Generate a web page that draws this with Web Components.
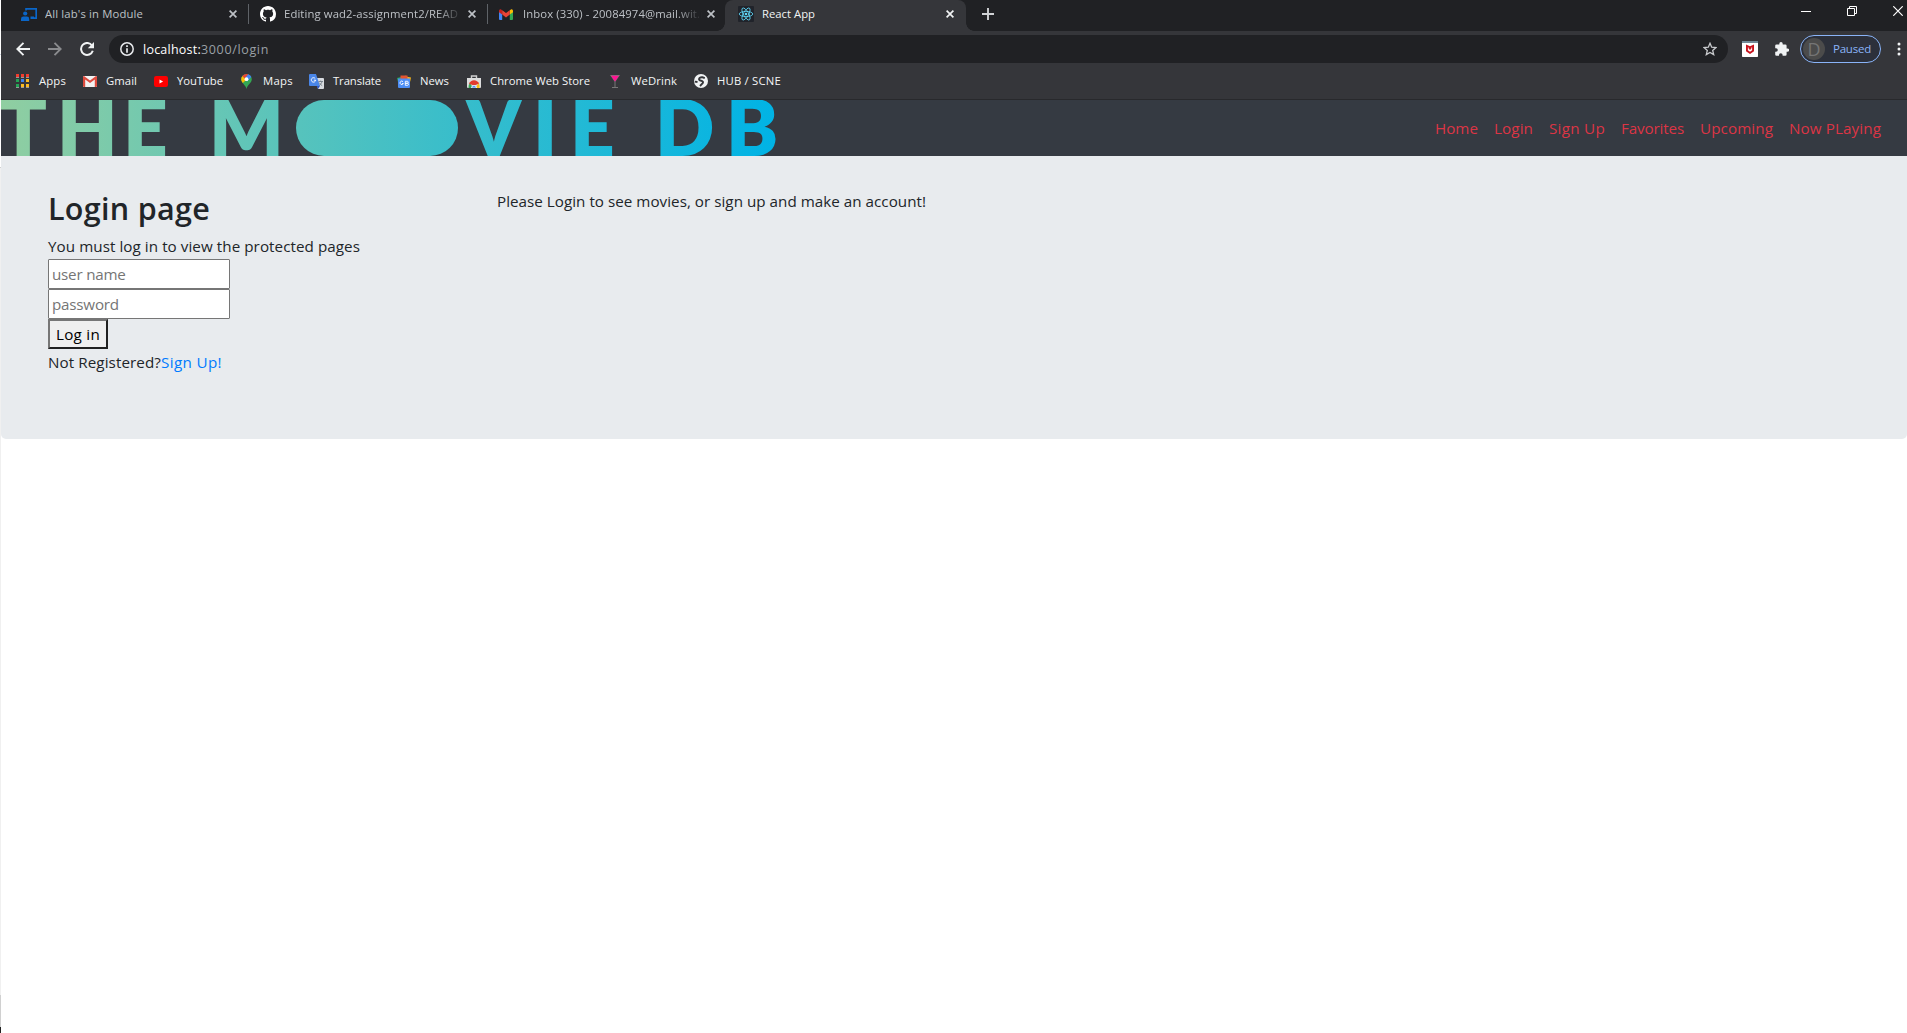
<!DOCTYPE html>
<html lang="en">
<head>
<meta charset="utf-8">
<title>React App</title>
<style>
html,body{margin:0;height:100%;background:#fff;overflow:hidden}
body{font-family:"Open Sans","Noto Sans",sans-serif}
</style>
</head>
<body>
<app-window></app-window>
<script>
const make = (name, html, after) => customElements.define(name, class extends HTMLElement {
  connectedCallback() {
    if (this.shadowRoot) return;
    const t = document.createElement('template');
    t.innerHTML = typeof html === 'function' ? html(this) : html;
    this.attachShadow({mode: 'open'}).append(t.content.cloneNode(true));
    if (after) after(this);
  }
});

/* A run of text spread over a given width by letter spacing. */
make('fit-text', el => `<style>:host{display:inline-block;white-space:pre;line-height:inherit;width:${el.getAttribute('w')}px}span{display:inline-block}</style><span>${el.getAttribute('text')}</span>`, el => {
  const s = el.shadowRoot.querySelector('span');
  const n = [...s.textContent].length;
  s.style.letterSpacing = ((+el.getAttribute('w') - s.getBoundingClientRect().width) / n).toFixed(3) + 'px';
});

const icons = {
  module: [16,13,'<path d="M5 .9h10.200v9.300H11" fill="none" stroke="#0a66c8" stroke-width="1.700"/><path d="M5 0v2.500" stroke="#0a66c8" stroke-width="1.600"/><circle cx="4.200" cy="5.500" r="2.100" fill="#0a66c8"/><path d="M0 13v-2q0-2.400 2.500-2.400h3.300q2.400 0 2.400 2.400v2z" fill="#0a66c8"/><path d="M9.500 8.500h3.500v2.500H9.500z" fill="#0a66c8"/>'],
  github: [16,16,'<path fill="#fff" d="M8 0C3.580 0 0 3.580 0 8c0 3.540 2.290 6.530 5.470 7.590.4.070.55-.17.55-.38 0-.19-.01-.82-.01-1.490-2.010.37-2.530-.49-2.690-.94-.09-.23-.48-.94-.82-1.130-.28-.15-.68-.52-.01-.53.63-.01 1.080.58 1.230.82.720 1.210 1.870.87 2.330.66.070-.52.28-.87.510-1.070-1.780-.2-3.640-.89-3.640-3.950 0-.87.310-1.590.82-2.150-.08-.2-.36-1.020.08-2.120 0 0 .67-.21 2.200.82.640-.18 1.320-.27 2-.27s1.360.09 2 .27c1.530-1.040 2.200-.82 2.200-.82.440 1.100.160 1.920.08 2.120.510.56.82 1.270.82 2.150 0 3.070-1.870 3.750-3.650 3.950.29.25.54.73.54 1.480 0 1.070-.01 1.930-.01 2.200 0 .21.150.46.550.38A8 8 0 0 0 16 8c0-4.420-3.580-8-8-8z"/>'],
  gmail: [14,11,'<path fill="#4285f4" d="M0 1.500 3.200 4v7H1q-1 0-1-1z"/><path fill="#34a853" d="M14 1.500 10.800 4v7H13q1 0 1-1z"/><path fill="#fbbc04" d="M10.800 1.200 12.300.2Q14 0 14 1.800v1.400l-3.200 2.400z"/><path fill="#c5221f" d="M0 1.800Q0 0 1.700.2l1.500 1v4.400L0 3.200z"/><path fill="#ea4335" d="m3.200 1.200 3.800 2.900 3.800-2.900v4.400L7 8.500 3.200 5.600z"/>'],
  react: [16,16,'<rect width="16" height="16" rx="1" fill="#20232a"/><g fill="none" stroke="#61dafb" stroke-width=".8"><ellipse cx="8" cy="8" rx="6.800" ry="2.600"/><ellipse cx="8" cy="8" rx="6.800" ry="2.600" transform="rotate(60 8 8)"/><ellipse cx="8" cy="8" rx="6.800" ry="2.600" transform="rotate(120 8 8)"/></g><circle cx="8" cy="8" r="1.300" fill="#61dafb"/>'],
  close: [8,8,'<path d="m.6.6 6.800 6.800M7.400.6.6 7.400" stroke="currentColor" stroke-width="1.700"/>'],
  plus: [12,12,'<path d="M6 0v12M0 6h12" stroke="#d0d2d5" stroke-width="1.900"/>'],
  back: [14,14,'<path d="M14 7H1.500M7.500.8 1.300 7l6.200 6.200" fill="none" stroke="currentColor" stroke-width="1.900"/>'],
  forward: [14,14,'<path d="M0 7h12.500M6.500.8 12.700 7l-6.200 6.200" fill="none" stroke="currentColor" stroke-width="1.900"/>'],
  reload: [14,14,'<path d="M12 3.500A6 6 0 1 0 12.800 8.800" fill="none" stroke="#f1f3f4" stroke-width="2"/><path d="M14 0v6.200H7.800z" fill="#f1f3f4"/>'],
  info: [14,14,'<circle cx="7" cy="7" r="6.200" fill="none" stroke="#e8eaed" stroke-width="1.500"/><path d="M7 3.200v1.700M7 6.200v4.600" stroke="#e8eaed" stroke-width="1.700"/>'],
  star: [14,14,'<path d="m7 1.300 1.700 3.900 4.200.4-3.200 2.800 1 4.200L7 10.400l-3.700 2.200 1-4.200L1.100 5.600l4.200-.4z" fill="none" stroke="#c8cacd" stroke-width="1.300"/>'],
  mcafee: [16,16,'<rect width="16" height="16" rx=".7" fill="#fff"/><path d="M0 0h16v2H0z" fill="#718a98"/><path d="m4 3.500 4 1.800 4-1.800v6.700L8 13l-4-2.800z" fill="#c8141e"/><path d="M5.900 6.300 8 7.400l2.100-1.100v3L8 10.800 5.900 9.300z" fill="#fff"/><path d="m6.700 6.500 1.300.8 1.300-.8V8L8 8.800 6.700 8z" fill="#c8141e"/>'],
  puzzle: [14,14,'<path fill="#f1f3f4" d="M12.500 6.500h-.9V3.700q0-1.300-1.300-1.300H7.700v-.6a1.700 1.700 0 0 0-3.400 0v.6H1.500Q.2 2.400.2 3.700v2.500h.8a1.800 1.800 0 0 1 0 3.600H.2v2.700q0 1.300 1.300 1.300H4V13a1.800 1.800 0 0 1 3.600 0v.8h2.700q1.300 0 1.300-1.300V9.800h.9a1.650 1.650 0 0 0 0-3.300z"/>'],
  dots: [4,14,'<g fill="#f1f3f4"><circle cx="2" cy="2" r="1.500"/><circle cx="2" cy="7" r="1.500"/><circle cx="2" cy="12" r="1.500"/></g>'],
  min: [10,10,'<path d="M0 5.500h10" stroke="#fff"/>'],
  restore: [10,10,'<path d="M.5 2.500h7v7h-7zM2.500 2.500v-2h7v7h-2" fill="none" stroke="#fff"/>'],
  winclose: [10,10,'<path d="m.3.300 9.400 9.400M9.700.300.300 9.700" stroke="#fff" stroke-width="1.200"/>'],
  apps: [13,14,'<path fill="#f23c2e" d="M0 0h3v3H0zM5 0h3v3H5zM10 0h3v3h-3z"/><path fill="#23a455" d="M0 5h3v3H0zM0 10h3v3H0z"/><path fill="#3b82f0" d="M5 5h3v3H5z"/><path fill="#f9b921" d="M10 5h3v3h-3zM5 10h3v3H5zM10 10h3v3h-3z"/><path fill="#999" d="M0 3h3v1H0zM5 3h3v1H5zM10 3h3v1h-3zM0 13h3v1H0zM5 13h3v1H5zM10 13h3v1h-3z"/>'],
  oldmail: [14,11,'<rect width="14" height="11" rx="1" fill="#f2f2f2"/><path d="M0 1v9q0 1 1 1h1.200V3.500L7 7l4.800-3.500V11H13q1 0 1-1V1q0-1-1-1L7 4.600 1 0Q0 0 0 1z" fill="#dd4b3e"/>'],
  youtube: [14,11,'<rect width="14" height="11" rx="2.200" fill="#f00"/><path d="m5.500 3.500 3.600 2-3.600 2z" fill="#fff"/>'],
  maps: [11,15,'<path d="M5.500 0A5.300 5.300 0 0 1 10.800 5.300C10.800 9.300 6.600 10 5.500 15 4.700 11 .2 9.300.2 5.300A5.300 5.300 0 0 1 5.500 0z" fill="#34a853"/><path d="M.2 5.300Q.2 3.500 1.400 2L5.500 5.500 1.800 9Q.2 7 .2 5.300z" fill="#fbbc04"/><path d="M1.300 2Q3 0 5.500 0L7.500.4 3.800 4.500z" fill="#ea4335"/><path d="M7.200.3q2 .6 3.100 2.700L6 7.500 3.800 4.400z" fill="#4285f4"/><circle cx="5.500" cy="5.200" r="1.900" fill="#fff"/>'],
  translate: [15,15,'<path d="M6 4h8q1 0 1 1v9q0 1-1 1H9z" fill="#d8dce0"/><path d="M1 0h6l4 12H1q-1 0-1-1V1q0-1 1-1z" fill="#4a86e8"/><path d="m7.700 12 3.300 0-2 3z" fill="#2a56c6"/><path d="M6.200 4.500A2.200 2.200 0 1 0 6.700 6.200H4.800" fill="none" stroke="#fff" stroke-width="1"/><path d="M9.500 7.500h4.500M11.700 6.500v1M13.200 7.500q-.8 2.500-3 4M10.400 8.700q1 2 2.800 3" fill="none" stroke="#6a7580" stroke-width=".8"/>'],
  news: [14,13,'<path d="m0 3 9-2.600.8 4-9 2z" fill="#25a35a"/><path d="m6 1 8 1.500-.8 4L6 5z" fill="#f5b61c"/><path d="M3.500.5h7v5h-7z" fill="#e5532f"/><path d="M1 3.500h12V12q0 1-1 1H2q-1 0-1-1z" fill="#4d8ef5"/><path d="M6 6.700A1.700 1.700 0 1 0 6.300 8.500H5M8.300 6.300h2q1 .1 1 1t-1 1h-2zM8.300 8.300h2.200q1 .1 1 1t-1 1H8.300z" stroke="#fff" stroke-width=".9" fill="none"/>'],
  store: [14,13,'<path d="M4.500 3V1h5v2" fill="none" stroke="#d0d0d0" stroke-width="1.400"/><path d="M0 3h14v9q0 1-1 1H1q-1 0-1-1z" fill="#ddd"/><path d="M1.500 12.900Q1.300 9.500 3 8l3 5z" fill="#3aa757"/><path d="M2 8.800Q3.500 5.200 7 5.200t5.200 3.600L7 10.500z" fill="#e33b2e"/><path d="M11.800 8.300Q13 10 12.500 13H8z" fill="#fbc116"/><path d="M4.500 13a2.500 2.500 0 0 1 5 0z" fill="#4285f4" stroke="#fff" stroke-width=".8"/>'],
  drink: [10,13,'<path d="M0 0h10L5.500 6.500V12H8v1H2v-1h2.500V6.500z" fill="#777"/><path d="M1 .7h8L5 6.500z" fill="#ff1493"/>'],
  hub: [14,14,'<circle cx="7" cy="7" r="7" fill="#f1f3f4"/><path d="M10.800 4.200 8.500 3.300Q5.500 3 5 5.100 5 6.700 8 7q2 1 .2 2.700L6 12M.8 7.600l2.700.4" fill="none" stroke="#35363a" stroke-width="1.900"/>']
};
make('ui-icon', el => {
  const [w, h, body] = icons[el.getAttribute('name')];
  return `<style>:host{display:block;flex:none;width:${w}px;height:${h}px}svg{display:block}</style><svg width="${w}" height="${h}" viewBox="0 0 ${w} ${h}">${body}</svg>`;
});

make('browser-tab', el => `<style>
:host{display:flex;align-items:center;flex:none;box-sizing:border-box;width:239px;height:31px;padding:0 12px 3px 0;color:#bdc1c6;font-size:11.300px;line-height:20px;position:relative}
:host([active]){background:#35363a;color:#f1f3f4;border-radius:8px 8px 0 0}
:host([active])::before,:host([active])::after{content:"";position:absolute;bottom:0;width:8px;height:8px;background:radial-gradient(circle at 0 0,transparent 7.500px,#35363a 8px)}
:host([active])::before{left:-8px}
:host([active])::after{right:-8px;transform:scaleX(-1)}
.t{flex:1;margin-left:${el.getAttribute('gap')||8}px;overflow:hidden;white-space:nowrap;display:flex}
:host([fade]) .t{-webkit-mask-image:linear-gradient(90deg,#000 calc(100% - 26px),transparent)}
i{width:1px;height:20px;background:#5f6368;position:absolute;right:0;top:4px}
:host([nosep]) i{display:none}
.x{margin-left:5px}
</style><ui-icon name="${el.getAttribute('icon')}"></ui-icon><div class="t"><fit-text w="${el.getAttribute('w')}" text="${el.getAttribute('text')}"></fit-text></div><ui-icon class="x" name="close"></ui-icon><i></i>`);

make('tab-strip', `<style>
:host{display:flex;height:31px;background:#202124;color:#fff}
.m{padding-left:20px;width:248px}.g{padding-left:11px}.i{padding-left:11px;width:237px;padding-right:10px}.r{padding-left:13px;width:241px}
.p{padding:8px 0 0 9px;margin-left:7px}
.w{margin-left:auto;display:flex;gap:36px;padding:6px 4px 0 0}
</style>
<browser-tab class="m" icon="module" w="98" text="All lab's in Module"></browser-tab>
<browser-tab class="g" icon="github" w="174" text="Editing wad2-assignment2/READ" fade></browser-tab>
<browser-tab class="i" icon="gmail" gap="10" w="180" text="Inbox (330) - 20084974@mail.wit.i" fade nosep></browser-tab>
<browser-tab class="r" icon="react" w="53" text="React App" active nosep></browser-tab>
<ui-icon class="p" name="plus"></ui-icon>
<div class="w"><ui-icon name="min"></ui-icon><ui-icon name="restore"></ui-icon><ui-icon name="winclose"></ui-icon></div>`);

make('address-bar', `<style>
:host{display:flex;align-items:center;height:36px;background:#35363a;font-size:12.500px;line-height:26px;color:#f1f3f4;box-sizing:border-box;padding-left:15px}
.f{color:#8a8b8e;margin:0 18px}
.o{flex:none;display:flex;align-items:center;height:28px;width:1619px;box-sizing:border-box;border-radius:14px;background:#202124;margin-left:15px;padding:0 11px}
.o fit-text{margin-left:9px;color:#fff;padding-top:2px}.o fit-text+fit-text{margin:0;color:#9aa0a6}
.s{margin-left:auto}
.a{margin:0 17px 0 14px}
.p{flex:none;display:flex;align-items:center;box-sizing:border-box;width:81px;height:28px;border:1px solid #8ab4f8;border-radius:14px;margin-left:11px;padding-left:2px;color:#8ab4f8;font-size:11.500px;background:#2c303a}
.d{width:22px;height:22px;border-radius:50%;background:#4b4b4b;color:#757575;font:18px/22px "Open Sans";text-align:center;margin-right:8px}
.k{margin-left:16px}
</style>
<ui-icon name="back"></ui-icon><ui-icon class="f" name="forward"></ui-icon><ui-icon name="reload"></ui-icon>
<div class="o"><ui-icon name="info"></ui-icon><fit-text w="58" text="localhost:"></fit-text><fit-text w="68" text="3000/login"></fit-text><ui-icon class="s" name="star"></ui-icon></div>
<ui-icon class="a" name="mcafee"></ui-icon><ui-icon name="puzzle"></ui-icon>
<div class="p"><div class="d">D</div><fit-text w="38" text="Paused"></fit-text></div><ui-icon class="k" name="dots"></ui-icon>`);

/* icon, icon x, label x, label width, label */
const marks = [['apps',16,39,27,'Apps'],['oldmail',83,106,31,'Gmail'],['youtube',154,177,46,'YouTube'],['maps',241,263,30,'Maps'],['translate',309,333,48,'Translate'],['news',397,420,29,'News'],['store',467,490,100,'Chrome Web Store'],['drink',610,631,46,'WeDrink'],['hub',694,717,64,'HUB / SCNE']];
make('bookmarks-bar', () => {
  let x = 1;
  const items = marks.map(([ic, ix, tx, w, t]) => {
    const a = ix - x, b = tx - ix - icons[ic][0];
    x = tx + w;
    return `<ui-icon name="${ic}" style="margin:0 ${b}px 0 ${a}px"></ui-icon><fit-text w="${w}" text="${t}"></fit-text>`;
  }).join('');
  return `<style>:host{display:flex;align-items:center;box-sizing:border-box;height:33px;padding-bottom:4px;background:#35363a;border-bottom:1px solid #28292c;color:#f4f5f6;font-size:11.300px;line-height:20px}fit-text{flex:none}</style>${items}`;
});

make('movie-logo', `<style>:host{display:block;width:776px;height:56px}svg{display:block;overflow:visible;clip-path:inset(0)}text{font-family:Lato,sans-serif;font-weight:800;font-size:78px}</style>
<svg width="776" height="56" viewBox="0 0 776 56"><defs><linearGradient id="g" gradientUnits="userSpaceOnUse" x1="0" x2="776" y1="0" y2="0"><stop offset="0" stop-color="#90cea1"/><stop offset=".56" stop-color="#3cbec9"/><stop offset="1" stop-color="#00b3e5"/></linearGradient></defs>
<g fill="url(#g)"><text y="56" x="-1.500 56 122">THE</text><text y="56" x="208">M</text><rect x="295" y="0" width="162" height="56" rx="28"/><text y="56" x="465 532 569">VIE</text><text y="56" x="654 725">DB</text></g></svg>`);

make('site-nav', `<style>
:host{display:flex;align-items:center;justify-content:space-between;height:56px;background:#353a42;color:#dc3545;font-size:15.200px;line-height:24px}
nav{display:flex;gap:16px;padding:0 26px 1px 0}
</style><movie-logo></movie-logo><nav><fit-text w="43" text="Home"></fit-text><fit-text w="39" text="Login"></fit-text><fit-text w="56" text="Sign Up"></fit-text><fit-text w="63" text="Favorites"></fit-text><fit-text w="73" text="Upcoming"></fit-text><fit-text w="92" text="Now PLaying"></fit-text></nav>`);

make('login-form', `<style>
:host{display:flex;flex-direction:column;align-items:flex-start;width:449px;font-size:15.200px;line-height:24px}
h2{margin:0 0 7px;font-size:30.500px;font-weight:600;line-height:38px;height:38px}
input{display:block;box-sizing:border-box;width:182px;height:30px;margin:0;border:1px solid #767676;border-radius:1px;padding:0 3px 1px;font:15.200px "Open Sans";letter-spacing:-.22px;background:#fff}
input::placeholder{color:#757575;opacity:1}
button{box-sizing:border-box;width:60px;height:30px;margin:0;border:2px solid;border-color:#767676 #212121 #212121 #767676;background:#efefef;color:#000;padding:0 0 1px;font:15.200px/24px "Open Sans"}
p{margin:0 0 1px}p:last-child{margin:1px 0 0}a{color:#007bff}
p fit-text{vertical-align:top}
</style>
<h2><fit-text w="162" text="Login page"></fit-text></h2><p><fit-text w="312" text="You must log in to view the protected pages"></fit-text></p>
<input placeholder="user name"><input placeholder="password"><button><fit-text w="44" text="Log in"></fit-text></button>
<p><fit-text w="113" text="Not Registered?"></fit-text><a><fit-text w="61" text="Sign Up!"></fit-text></a></p>`);

make('login-panel', `<style>
:host{display:flex;box-sizing:border-box;height:283px;background:#e8ebee;border-radius:0 0 5px 5px;padding:33px 47px;color:#212529;font-size:15.200px;line-height:24px}
</style><login-form></login-form><fit-text w="429" text="Please Login to see movies, or sign up and make an account!"></fit-text>`);

make('app-window', `<style>
:host{display:flex;height:1033px;background:#fff}
.e{width:1px;flex:none;background:linear-gradient(#fff 0,#fff 54px,#ccd3de 54px,#ccd3de 55px,#fff 55px,#fff 167px,#d0d0d0 167px,#d0d0d0 168px,#f0f0f0 168px,#f0f0f0 995px,#d0d0d0 995px,#d0d0d0 1027px,#202020 1027px)}
main{flex:1;min-width:0}
</style><div class="e"></div><main><tab-strip></tab-strip><address-bar></address-bar><bookmarks-bar></bookmarks-bar><site-nav></site-nav><login-panel></login-panel></main>`);
</script>
</body>
</html>
